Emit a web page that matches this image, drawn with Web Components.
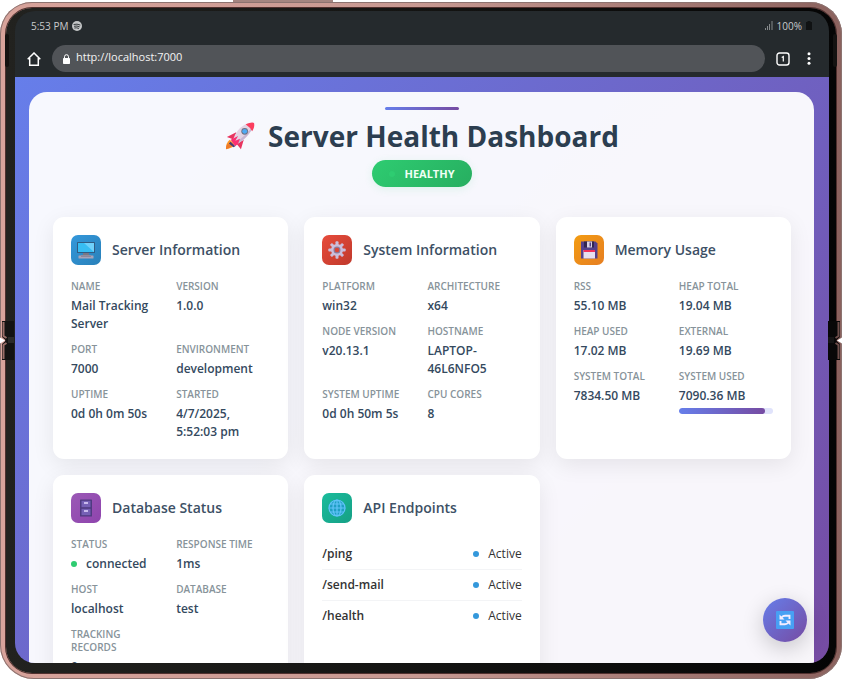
<!DOCTYPE html>
<html lang="en">
<head>
<meta charset="utf-8">
<meta name="viewport" content="width=device-width, initial-scale=1">
<title>Server Health Dashboard</title>
<style>
  html, body { margin: 0; height: 100%; background: #fff; }
  body { font-family: "Open Sans", "Noto Sans", sans-serif; color: #2c3e50; }
</style>
</head>
<body>
<device-frame>
  <status-bar time="5:53 PM" battery="100%"></status-bar>
  <browser-bar url="http://localhost:7000"></browser-bar>
  <health-dashboard heading="Server Health Dashboard" status="HEALTHY">
    <info-card heading="Server Information" tone="blue">
      <svg slot="icon" viewBox="0 0 18 18" width="18" height="18" aria-hidden="true"><rect x="0" y="1" width="18" height="11" rx=".6" fill="#315c84"/><rect x="1" y="2" width="16" height="9" fill="#37bdf3"/><path d="M7 2h10v9z" fill="#70d1fb"/><path d="M6 12h6v2h2v1H4v-1h2z" fill="#777887"/><rect x="1.500" y="14.500" width="15" height="3" rx=".5" fill="#a9a3b8"/><path d="M4 15.500h10" stroke="#8b889c" stroke-width="1"/></svg>
      <info-item label="NAME">Mail Tracking Server</info-item>
      <info-item label="VERSION">1.0.0</info-item>
      <info-item label="PORT">7000</info-item>
      <info-item label="ENVIRONMENT">development</info-item>
      <info-item label="UPTIME">0d 0h 0m 50s</info-item>
      <info-item label="STARTED">4/7/2025, 5:52:03 pm</info-item>
    </info-card>
    <info-card heading="System Information" tone="red">
      <svg slot="icon" viewBox="0 0 18 18" width="18" height="18" aria-hidden="true"><g fill="#cbbedb"><rect x="7.500" y=".3" width="3" height="17.400" rx="1"/><rect x="7.500" y=".3" width="3" height="17.400" rx="1" transform="rotate(45 9 9)"/><rect x="7.500" y=".3" width="3" height="17.400" rx="1" transform="rotate(90 9 9)"/><rect x="7.500" y=".3" width="3" height="17.400" rx="1" transform="rotate(135 9 9)"/><circle cx="9" cy="9" r="6"/></g><circle cx="9" cy="9" r="2.900" fill="#dc4637" stroke="#8c7b9c" stroke-width="1.200"/></svg>
      <info-item label="PLATFORM">win32</info-item>
      <info-item label="ARCHITECTURE">x64</info-item>
      <info-item label="NODE VERSION">v20.13.1</info-item>
      <info-item label="HOSTNAME">LAPTOP-46L6NFO5</info-item>
      <info-item label="SYSTEM UPTIME">0d 0h 50m 5s</info-item>
      <info-item label="CPU CORES">8</info-item>
    </info-card>
    <info-card heading="Memory Usage" tone="orange">
      <svg slot="icon" viewBox="0 0 18 18" width="18" height="18" aria-hidden="true"><path d="M1 .5h14.500L17.500 2.500V17.500H1z" fill="#54408c"/><path d="M4 .5h10v6H4z" fill="#322650"/><path d="M7 .5h5v6H7z" fill="#d9d2e4"/><path d="M9.500 1.500h1.500v4H9.500z" fill="#54408c"/><path d="M3.500 9h11.500v8.500H3.500z" fill="#e7dff0"/><path d="M3.500 9h11.500v2H3.500z" fill="#f2315c"/></svg>
      <info-item label="RSS">55.10 MB</info-item>
      <info-item label="HEAP TOTAL">19.04 MB</info-item>
      <info-item label="HEAP USED">17.02 MB</info-item>
      <info-item label="EXTERNAL">19.69 MB</info-item>
      <info-item label="SYSTEM TOTAL">7834.50 MB</info-item>
      <info-item label="SYSTEM USED">7090.36 MB<usage-meter slot="extra" value="91"></usage-meter></info-item>
    </info-card>
    <info-card heading="Database Status" tone="purple">
      <svg slot="icon" viewBox="0 0 18 18" width="18" height="18" aria-hidden="true"><rect x="3" y=".5" width="12" height="17" rx=".6" fill="#4f3a80"/><rect x="4.500" y="1.800" width="9" height="6.400" fill="#7560b5"/><rect x="4.500" y="9.800" width="9" height="6.400" fill="#7560b5"/><path d="M7 4h4M7 12h4" stroke="#e5d9ff" stroke-width="1.300"/></svg>
      <info-item label="STATUS"><status-dot tone="green">connected</status-dot></info-item>
      <info-item label="RESPONSE TIME">1ms</info-item>
      <info-item label="HOST">localhost</info-item>
      <info-item label="DATABASE">test</info-item>
      <info-item label="TRACKING RECORDS">0</info-item>
    </info-card>
    <info-card heading="API Endpoints" tone="teal" layout="list">
      <svg slot="icon" viewBox="0 0 18 18" width="18" height="18" aria-hidden="true"><circle cx="9" cy="9" r="8.500" fill="#1f9fc4"/><g fill="none" stroke="#62c4f8" stroke-width="1.200"><circle cx="9" cy="9" r="8"/><ellipse cx="9" cy="9" rx="4" ry="8"/><path d="M9 1v16M1 9h16M2.200 5h13.600M2.200 13h13.600"/></g></svg>
      <endpoint-row path="/ping">Active</endpoint-row>
      <endpoint-row path="/send-mail">Active</endpoint-row>
      <endpoint-row path="/health">Active</endpoint-row>
    </info-card>
  </health-dashboard>
  <refresh-button slot="overlay"></refresh-button>
</device-frame>

<script>
const define = (name, html, setup) => {
  const template = document.createElement("template");
  template.innerHTML = html;
  customElements.define(name, class extends HTMLElement {
    constructor() {
      super();
      this.attachShadow({ mode: "open" }).append(template.content.cloneNode(true));
    }
    connectedCallback() {
      this.shadowRoot.querySelectorAll("[data-text]").forEach(el => {
        el.textContent = this.getAttribute(el.dataset.text) ?? "";
      });
      if (setup) setup(this, this.shadowRoot);
    }
  });
};

define("device-frame", `
<style>
  :host { display: block; position: relative; height: 100vh; box-sizing: border-box; padding: 2px 0 0; }
  .shell { height: 100%; box-sizing: border-box; padding: 6px; border-radius: 32px 32px 34px 34px;
    background: linear-gradient(90deg, #d8a39b, #c79992 50%, #8b625e);
    box-shadow: inset 0 0 0 1px #8c7370; }
  .bezel { height: 100%; box-sizing: border-box; padding: 3px 7px 10px 9px; border-radius: 26px; background: linear-gradient(90deg, #22221f, #050505);
    box-shadow: 0 0 0 1px #50302e; }
  .screen { position: relative; height: 100%; overflow: hidden; border-radius: 20px;
    display: flex; flex-direction: column; background: #252a2d; }
  .key { position: absolute; top: 0; left: 233px; width: 100px; height: 2px; background: #a48580; }
  .hinge { position: absolute; top: 320px; width: 14px; height: 41px; }
  .left { left: 0; }
  .right { right: 0; transform: scaleX(-1); }
  .antenna { position: absolute; top: 34px; width: 4px; height: 33px; border-radius: 2px; background: #141211; }
  .a1 { left: 5px; } .a2 { right: 5px; }
</style>
<div class="shell"><div class="bezel"><div class="screen"><slot></slot><slot name="overlay"></slot></div></div></div>
<div class="key"></div><div class="antenna a1"></div><div class="antenna a2"></div>
<svg class="hinge left" viewBox="0 0 14 41" aria-hidden="true"><path d="M2 1h12v39H2V24l4-3.500L2 17z" fill="#131312"/><path d="M8 17h6v6H8z" fill="#2b2b29"/><path d="M3.500 2v14l3 2M3.500 39V25l3-2" fill="none" stroke="#9a6f69" stroke-width="2"/><path d="M0 17.500 5 20.500 0 23.500z" fill="#fff"/></svg>
<svg class="hinge right" viewBox="0 0 14 41" aria-hidden="true"><path d="M2 1h12v39H2V24l4-3.500L2 17z" fill="#080808"/><path d="M8 17h6v6H8z" fill="#151515"/><path d="M3.500 2v14l3 2M3.500 39V25l3-2" fill="none" stroke="#6d4e4b" stroke-width="2"/><path d="M0 17.500 5 20.500 0 23.500z" fill="#fff"/></svg>`);

define("status-bar", `
<style>
  :host { display: flex; flex: none; align-items: center; gap: 4px; height: 29px; padding: 0 17px 0 16px; font-size: 10px; color: #c9cbcc; }
  .gap { flex: 1; }
  svg { display: block; }
</style>
<span data-text="time"></span>
<svg width="10" height="10" viewBox="0 0 10 10" aria-hidden="true"><circle cx="5" cy="5" r="5" fill="#c4c6c7"/><path d="M2 3.400q3-.9 6 .5M2.400 5.200q2.600-.7 4.900.5M2.700 6.900q2.100-.5 3.900.4" fill="none" stroke="#252a2d" stroke-width=".9" stroke-linecap="round"/></svg>
<span class="gap"></span>
<svg width="8" height="9" viewBox="0 0 8 9" fill="#85898b" aria-hidden="true"><path d="M0 7h1v2H0zM2 5h1v4H2zM4 3h1v6H4zM6.500 0h1v9h-1z"/></svg>
<span data-text="battery"></span>
<svg width="6" height="9" viewBox="0 0 6 9" fill="#101213" aria-hidden="true"><path d="M1.500 0h3v1H6v8H0V1h1.500z"/></svg>`);

define("browser-bar", `
<style>
  :host { display: flex; flex: none; align-items: center; height: 37px; padding: 0 13px 0 11px; color: #fff; }
  button { all: unset; display: flex; flex: none; align-items: center; justify-content: center; }
  .home { width: 16px; margin-right: 10px; }
  .tabs { width: 14px; margin: 0 12px 0 11px; }
  .menu { width: 14px; }
  label { flex: 1; min-width: 0; display: flex; align-items: center; gap: 6px; height: 27px; padding: 0 11px; border-radius: 14px; background: #515458; }
  input { all: unset; flex: 1; min-width: 0; height: 20px; font-size: 11px; line-height: 16px; padding-bottom: 4px; box-sizing: border-box; color: #f3f3f3; }
  svg { display: block; flex: none; }
</style>
<button class="home" aria-label="Home"><svg width="14" height="14" viewBox="0 0 14 14" fill="none" stroke="#fff" stroke-width="1.500"><path d="M.7 7.300 7 1l6.300 6.300M2.700 6v7.200h8.600V6"/></svg></button>
<label><svg width="7" height="10" viewBox="0 0 7 10" aria-hidden="true"><rect y="4" width="7" height="6" rx=".7" fill="#fff"/><path d="M1.500 4.500V2.700a2 2 0 0 1 4 0v1.800" fill="none" stroke="#fff"/></svg><input type="text" aria-label="Address" spellcheck="false"></label>
<button class="tabs" aria-label="Tabs"><svg width="14" height="14" viewBox="0 0 14 14" fill="none" stroke="#fff"><rect x="1" y="1" width="12" height="12" rx="2.500" stroke-width="1.400"/><path d="M5.700 5.500 7.300 4.600V9.500" stroke-width="1.200"/></svg></button>
<button class="menu" aria-label="Menu"><svg width="4" height="13" viewBox="0 0 4 13" fill="#fff"><circle cx="2" cy="1.700" r="1.500"/><circle cx="2" cy="6.500" r="1.500"/><circle cx="2" cy="11.300" r="1.500"/></svg></button>`,
(host, root) => { root.querySelector("input").value = host.getAttribute("url"); });

define("health-dashboard", `
<style>
  :host { display: block; flex: 1; min-height: 0; overflow: hidden; padding: 15px 15px 0 14px; background: linear-gradient(135deg, #667eea, #764ba2); }
  main { min-height: 100%; box-sizing: border-box; padding: 15px 23px 15px 24px; border-radius: 18px 18px 0 0; background: #fffffff2;
    display: flex; flex-direction: column; }
  header { display: flex; flex-direction: column; align-items: center; margin-bottom: 30px; }
  .accent { width: 74px; height: 3px; border-radius: 2px; background: linear-gradient(90deg, #667eea, #764ba2); }
  h1 { display: flex; align-items: center; gap: 13px; margin: 6px 0 4px; font-size: 28px; line-height: 40px; font-weight: 700; color: #2c3e50; }
  .pill { display: flex; align-items: center; gap: 9px; height: 27px; padding: 0 17px; border-radius: 14px; font-size: 11px; font-weight: 700;
    color: #f0fff5; background: linear-gradient(135deg, #2ecc71, #27ae60); box-shadow: 0 2px 8px #2ecc7120; }
  .dot { width: 6px; height: 6px; border-radius: 50%; background: #2ecc71; }
  .grid { display: grid; grid-template-columns: repeat(3, minmax(0, 1fr)); gap: 16px; }
</style>
<main>
  <header>
    <div class="accent"></div>
    <h1><svg width="30" height="30" viewBox="0 0 32 32" aria-hidden="true"><path d="M5 20q-4 3-4 10 7-1 10-5z" fill="#ff9827"/><path d="M3 24q-2 2-2 6 4-1 6-3z" fill="#ef7a29"/><path d="M12 12 2 17l8 3zM20 20l-3 10-5-6z" fill="#e8345f"/><path d="M8 21Q12 9 21 4 27 1 31 2q0 5-4 10-6 9-17 14z" fill="#e3d4e4"/><path d="M11 23Q22 16 30 5q-1 5-5 9-5 7-15 12z" fill="#c8b7d2"/><path d="M22 3.500Q28 1 31 2q1 4-2 9-2-4-7-7.500z" fill="#fb3e5f"/><circle cx="21" cy="11" r="3.600" fill="#6f7183"/><circle cx="21" cy="11" r="2.600" fill="#4faaf3"/><path d="M6 20l8-4-3 5 5-2-2 5-3 3z" fill="#fa2f72"/><path d="m6 22 5 5-2 1-5-4z" fill="#493a78"/></svg><span data-text="heading"></span></h1>
    <div class="pill"><span class="dot"></span><span data-text="status"></span></div>
  </header>
  <div class="grid"><slot></slot></div>
</main>`);

define("info-card", `
<style>
  :host { display: block; box-sizing: border-box; padding: 18px; border-radius: 11px; background: #fff; box-shadow: 0 6px 22px #00000014; --tone: linear-gradient(135deg, #3498db, #2980b9); }
  :host([tone="red"]) { --tone: linear-gradient(135deg, #e74c3c, #c0392b); }
  :host([tone="orange"]) { --tone: linear-gradient(135deg, #f39c12, #e67e22); }
  :host([tone="purple"]) { --tone: linear-gradient(135deg, #9b59b6, #8e44ad); }
  :host([tone="teal"]) { --tone: linear-gradient(135deg, #1abc9c, #16a085); }
  header { display: flex; align-items: center; gap: 11px; margin-bottom: 15px; }
  .icon { display: flex; flex: none; align-items: center; justify-content: center; width: 30px; height: 30px; border-radius: 7px; background: var(--tone); }
  h2 { margin: 0; font-size: 14px; line-height: 20px; font-weight: 600; color: #3d5065; }
  .body { display: grid; grid-template-columns: repeat(2, minmax(0, 1fr)); gap: 10px 11px; }
  :host([layout="list"]) .body { display: block; padding-top: 1px; }
</style>
<header><span class="icon"><slot name="icon"></slot></span><h2 data-text="heading"></h2></header>
<div class="body"><slot></slot></div>`);

define("info-item", `
<style>
  :host { display: block; }
  .label { margin-bottom: 4px; font-size: 10px; line-height: 13px; font-weight: 600; color: #87939a; }
  .value { font-size: 12px; line-height: 18px; font-weight: 600; color: #34495e; }
</style>
<div class="label" data-text="label"></div><div class="value"><slot></slot></div><slot name="extra"></slot>`);

define("usage-meter", `
<style>
  :host { display: block; height: 6px; margin-top: 3px; border-radius: 3px; background: #e0e3fb; overflow: hidden; }
  .fill { height: 100%; border-radius: 3px; background: linear-gradient(90deg, #667eea, #764ba2); }
</style>
<div class="fill"></div>`,
(host, root) => { root.querySelector(".fill").style.width = host.getAttribute("value") + "%"; });

define("status-dot", `
<style>
  :host { display: flex; align-items: center; gap: 9px; --dot: #3498db; }
  :host([tone="green"]) { --dot: #2ecc71; }
  i { width: 6px; height: 6px; border-radius: 50%; background: var(--dot); }
</style>
<i></i><span><slot></slot></span>`);

define("endpoint-row", `
<style>
  :host { display: flex; align-items: center; justify-content: space-between; box-sizing: border-box; height: 31px; border-bottom: 1px solid #f3f4f6; font-size: 12px; line-height: 18px; color: #333; }
  :host(:last-of-type) { border-bottom-color: transparent; }
  strong { font-weight: 600; }
</style>
<strong data-text="path"></strong><status-dot><slot></slot></status-dot>`);

define("refresh-button", `
<style>
  :host { position: absolute; right: 22px; bottom: 21px; }
  button { all: unset; display: flex; align-items: center; justify-content: center; width: 44px; height: 44px; border-radius: 50%;
    background: linear-gradient(135deg, #667eea, #764ba2); box-shadow: 0 6px 22px #00000033; cursor: pointer; }
</style>
<button aria-label="Refresh"><svg width="18" height="18" viewBox="0 0 18 18" aria-hidden="true"><rect width="18" height="18" rx="1" fill="#47a0f4"/><path d="M3.500 3.500v5h5zM14.500 14.500v-5h-5z" fill="#f3edff"/><path d="M5.500 6.500Q7 4.700 9 4.700h4.500V8M12.500 11.500Q11 13.300 9 13.300H4.500V10" fill="none" stroke="#f3edff" stroke-width="1.900"/></svg></button>`);
</script>
</body>
</html>
